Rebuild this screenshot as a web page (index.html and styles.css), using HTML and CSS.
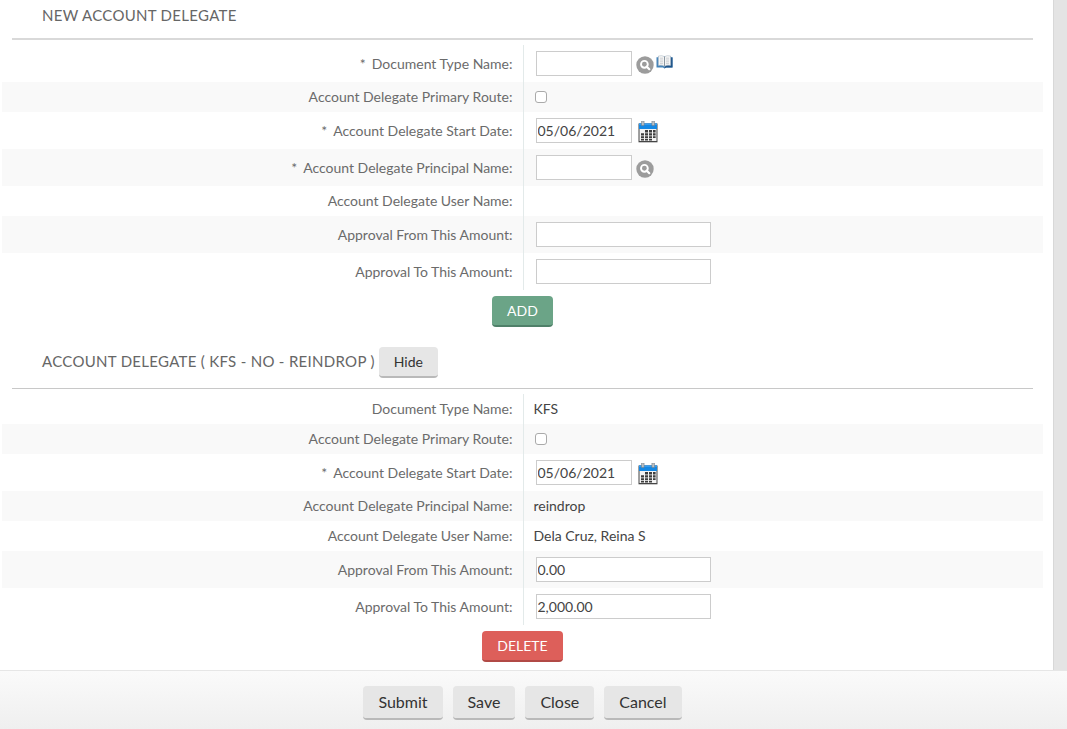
FILE: index.html
```html
<!DOCTYPE html>
<html lang="en">
<head>
<meta charset="utf-8">
<meta name="viewport" content="width=device-width, initial-scale=1">
<title>Account Delegate</title>
<link rel="stylesheet" href="styles.css">
</head>
<body>
<svg class="sprites" aria-hidden="true">
  <symbol id="icon-search" viewBox="0 0 18 18">
    <circle cx="9" cy="9" r="8.7" fill="#9c9c9c"/>
    <circle cx="8.4" cy="8.3" r="3.4" fill="none" stroke="#fff" stroke-width="1.9"/>
    <path d="M10.8 10.7l2.5 2.5" stroke="#fff" stroke-width="2.2" stroke-linecap="round"/>
  </symbol>
  <symbol id="icon-book" viewBox="0 0 17 14">
    <path d="M0.5 2.2h2V1h12v1.2h2v10.3H10L8.5 13.6 7 12.5H0.5z" fill="#4583b8"/>
    <path d="M12 2.5h4.5v10H10l-1.5 1z" fill="#1f5489"/>
    <path d="M2.4 1Q6 0 8.5 1.6 11 0 14.6 1v9.4Q11 9.6 8.5 11.2 6 9.6 2.4 10.4z" fill="#f5f5f5" stroke="#a9b6c2" stroke-width=".5"/>
    <path d="M8.5 1.6v9.6" stroke="#8b969f" stroke-width="1"/>
    <path d="M4 3.2h3M4 5h3M4 6.8h3M4 8.6h3M10 3.2h3M10 5h3M10 6.8h3M10 8.6h3" stroke="#c4c8cb" stroke-width=".8"/>
  </symbol>
  <symbol id="icon-calendar" viewBox="0 0 20 22">
    <path d="M.5 2.5h19v18.8H.5z" fill="#454545"/>
    <path d="M1.5 8h17v12H1.5z" fill="#f3f3f3"/>
    <path d="M1 2.5h18V8H1z" fill="#1688e3"/>
    <path d="M1 2.5h18v1.4H1z" fill="#3a9ff0"/>
    <path d="M3.5 0h2.6v4.5H3.5zM13.9 0h2.6v4.5h-2.6z" fill="#b9c1c7" stroke="#70777c" stroke-width=".5"/>
    <path d="M7 9h3v2.4H7zM11 9h3v2.4h-3zM15 9h2.6v2.4H15zM3 12.3h3v2.2H3zM7 12.3h3v2.2H7zM11 12.3h3v2.2h-3zM15 12.3h2.6v2.2H15zM3 15.2h3v1.9H3zM7 15.2h3v1.9H7zM11 15.2h3v1.9h-3zM15 15.2h2.6v1.9H15zM3 17.8h3v1.6H3zM7 17.8h3v1.6H7zM11 17.8h3v1.6h-3z" fill="#3d3d3d"/>
  </symbol>
</svg>

<div class="viewport">
  <main class="page">
    <section>
      <header class="section-head">
        <h2 class="section-title">NEW ACCOUNT DELEGATE</h2>
      </header>
      <table class="form-table">
        <tr><th scope="row"><label for="n-type"><span class="req">*</span>Document Type Name:</label></th>
          <td><div class="field"><input class="text" id="n-type" type="text"><button class="icon-btn lookup" type="button" aria-label="Search document type"><svg><use href="#icon-search"/></svg></button><button class="icon-btn book" type="button" aria-label="Document type details"><svg><use href="#icon-book"/></svg></button></div></td></tr>
        <tr><th scope="row"><label for="n-primary">Account Delegate Primary Route:</label></th>
          <td><div class="field"><input class="check" id="n-primary" type="checkbox"></div></td></tr>
        <tr><th scope="row"><label for="n-start"><span class="req">*</span>Account Delegate Start Date:</label></th>
          <td><div class="field"><input class="text" id="n-start" type="text" value="05/06/2021"><button class="icon-btn calendar" type="button" aria-label="Choose date"><svg><use href="#icon-calendar"/></svg></button></div></td></tr>
        <tr><th scope="row"><label for="n-principal"><span class="req">*</span>Account Delegate Principal Name:</label></th>
          <td><div class="field"><input class="text" id="n-principal" type="text"><button class="icon-btn lookup" type="button" aria-label="Search principal"><svg><use href="#icon-search"/></svg></button></div></td></tr>
        <tr><th scope="row">Account Delegate User Name:</th><td></td></tr>
        <tr><th scope="row"><label for="n-from">Approval From This Amount:</label></th>
          <td><div class="field"><input class="text wide" id="n-from" type="text"></div></td></tr>
        <tr><th scope="row"><label for="n-to">Approval To This Amount:</label></th>
          <td><div class="field"><input class="text wide" id="n-to" type="text"></div></td></tr>
      </table>
      <div class="row-action"><button class="btn btn-add" type="button">ADD</button></div>
    </section>

    <section>
      <header class="section-head section-head-toggle">
        <h2 class="section-title">ACCOUNT DELEGATE ( KFS - NO - REINDROP )</h2>
        <button class="btn" type="button">Hide</button>
      </header>
      <table class="form-table">
        <tr><th scope="row">Document Type Name:</th><td>KFS</td></tr>
        <tr><th scope="row"><label for="d-primary">Account Delegate Primary Route:</label></th>
          <td><div class="field"><input class="check" id="d-primary" type="checkbox"></div></td></tr>
        <tr><th scope="row"><label for="d-start"><span class="req">*</span>Account Delegate Start Date:</label></th>
          <td><div class="field"><input class="text" id="d-start" type="text" value="05/06/2021"><button class="icon-btn calendar" type="button" aria-label="Choose date"><svg><use href="#icon-calendar"/></svg></button></div></td></tr>
        <tr><th scope="row">Account Delegate Principal Name:</th><td>reindrop</td></tr>
        <tr><th scope="row">Account Delegate User Name:</th><td>Dela Cruz, Reina S</td></tr>
        <tr><th scope="row"><label for="d-from">Approval From This Amount:</label></th>
          <td><div class="field"><input class="text wide" id="d-from" type="text" value="0.00"></div></td></tr>
        <tr><th scope="row"><label for="d-to">Approval To This Amount:</label></th>
          <td><div class="field"><input class="text wide" id="d-to" type="text" value="2,000.00"></div></td></tr>
      </table>
      <div class="row-action"><button class="btn btn-delete" type="button">DELETE</button></div>
    </section>
  </main>
</div>

<footer class="actions">
  <button class="btn btn-large" type="button">Submit</button>
  <button class="btn btn-large" type="button">Save</button>
  <button class="btn btn-large" type="button">Close</button>
  <button class="btn btn-large" type="button">Cancel</button>
</footer>
</body>
</html>
```

FILE: styles.css
```css
* { box-sizing: border-box; }

body {
  margin: 0;
  min-height: 100vh;
  display: flex;
  flex-direction: column;
  background: #fff;
  color: #444;
  font-family: Lato, "Liberation Sans", sans-serif;
  font-size: 14px;
  line-height: 18px;
}

.sprites {
  display: none;
}

.viewport {
  flex: 1;
  display: flex;
  padding-right: 13px;
  background: #e4e4e4;
}

.page {
  flex: 1;
  min-width: 0;
  padding: 0 10px 8px 2px;
  background: #fff;
  border-right: 1px solid #d8d8d8;
}

.section-head {
  display: flex;
  align-items: center;
  gap: 4px;
  height: 40px;
  margin: 0 10px 5px;
  padding: 0 0 8px 30px;
  border-bottom: 2px solid #d9d9d9;
}

.section-head-toggle {
  align-items: baseline;
  height: 62px;
  padding: 20px 0 0 30px;
  border-bottom-width: 1px;
  border-color: #c8c8c8;
}

.section-title {
  margin: 0;
  color: #666;
  font-size: 15px;
  font-weight: 400;
  letter-spacing: 0.02em;
}

.form-table {
  width: 100%;
  table-layout: fixed;
  border-collapse: separate;
  border-spacing: 0;
}

.form-table tr:nth-child(even) {
  background: #f9f9f9;
}

.form-table th,
.form-table td {
  width: 50%;
  padding: 6px 10px;
  vertical-align: middle;
}

.form-table th {
  color: #6b6b6b;
  font-weight: 400;
  text-align: right;
}

.form-table td {
  border-left: 1px solid #e3eaea;
}

.req {
  margin-right: 6px;
}

.field {
  display: flex;
  align-items: center;
  min-height: 18px;
}

.text {
  width: 96px;
  height: 25px;
  margin: 0 0 0 2px;
  padding: 0 1px;
  border: 1px solid #ccc;
  border-radius: 0;
  background: #fff;
  color: #444;
  font: inherit;
}

.wide {
  width: 175px;
}

.check {
  appearance: none;
  width: 12px;
  height: 12px;
  margin: 0 0 0 1px;
  border: 1px solid #aaa;
  border-radius: 3px;
  background: #fff;
}

.check:checked {
  background: #6ba487;
}

.icon-btn {
  flex: none;
  padding: 0;
  border: 0;
  background: none;
  cursor: pointer;
}

.icon-btn svg {
  display: block;
  width: 100%;
  height: 100%;
}

.lookup {
  width: 18px;
  height: 18px;
  margin: 3px 0 0 4px;
}

.book {
  width: 17px;
  height: 14px;
  margin: 0 0 4px 2px;
}

.calendar {
  width: 20px;
  height: 22px;
  margin: 3px 0 0 6px;
}

.row-action {
  display: flex;
  justify-content: center;
  padding-top: 6px;
}

.btn {
  height: 31px;
  padding: 0 15px;
  border: 0;
  border-bottom: 2px solid #b9b9b9;
  border-radius: 4px;
  background: #e6e6e6;
  color: #333;
  font: inherit;
  cursor: pointer;
}

.btn-add {
  border-color: #4f8069;
  background: #6ba487;
  color: #fff;
}

.btn-delete {
  border-color: #b14a46;
  background: #dd5f5a;
  color: #fff;
}

.btn-large {
  height: 34px;
  font-size: 16px;
}

.actions {
  display: flex;
  justify-content: center;
  gap: 10px;
  padding: 15px 22px 9px 0;
  border-top: 1px solid #e6e6e6;
  background: linear-gradient(#fafafa, #efefef);
}
```
